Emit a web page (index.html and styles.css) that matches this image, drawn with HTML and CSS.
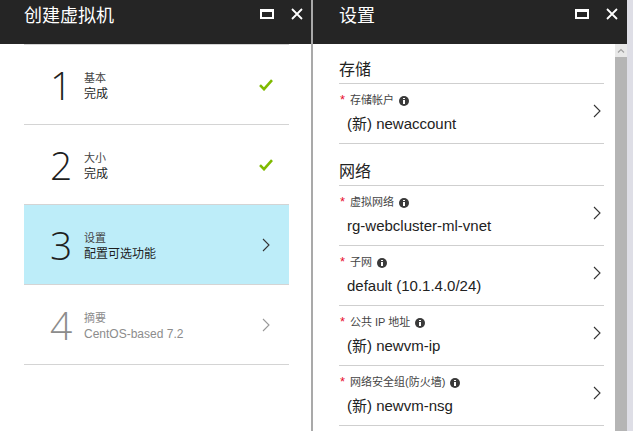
FILE: index.html
```html
<!DOCTYPE html>
<html lang="zh-CN">
<head>
<meta charset="utf-8">
<title>创建虚拟机</title>
<link rel="stylesheet" href="styles.css">
</head>
<body>
<div class="desk">
  <section class="blade blade-left">
    <header class="blade-head">
      <h1 class="blade-title">创建虚拟机</h1>
      <div class="head-actions">
        <span class="ic-max"></span>
        <svg class="ic-close" width="12" height="12" viewBox="0 0 12 12"><path d="M1 1 L11 11 M11 1 L1 11" stroke="#fff" stroke-width="1.8" fill="none"/></svg>
      </div>
    </header>
    <ol class="steps">
      <li class="step">
        <span class="step-num">1</span>
        <div class="step-text"><div class="step-label">基本</div><div class="step-sub">完成</div></div>
        <span class="step-icon"><svg width="14" height="12" viewBox="0 0 14 12"><path d="M1 6.2 L5 10.2 L13 1.2" stroke="#7fba00" stroke-width="2.6" fill="none"/></svg></span>
      </li>
      <li class="step">
        <span class="step-num">2</span>
        <div class="step-text"><div class="step-label">大小</div><div class="step-sub">完成</div></div>
        <span class="step-icon"><svg width="14" height="12" viewBox="0 0 14 12"><path d="M1 6.2 L5 10.2 L13 1.2" stroke="#7fba00" stroke-width="2.6" fill="none"/></svg></span>
      </li>
      <li class="step step-active">
        <span class="step-num">3</span>
        <div class="step-text"><div class="step-label">设置</div><div class="step-sub">配置可选功能</div></div>
        <span class="step-icon"><svg width="8" height="14" viewBox="0 0 8 14"><path d="M1 1 L7 7 L1 13" stroke="#333" stroke-width="1.1" fill="none"/></svg></span>
      </li>
      <li class="step step-disabled">
        <span class="step-num">4</span>
        <div class="step-text"><div class="step-label">摘要</div><div class="step-sub">CentOS-based 7.2</div></div>
        <span class="step-icon"><svg width="8" height="14" viewBox="0 0 8 14"><path d="M1 1 L7 7 L1 13" stroke="#999" stroke-width="1.1" fill="none"/></svg></span>
      </li>
    </ol>
  </section>

  <section class="blade blade-right">
    <header class="blade-head">
      <h1 class="blade-title">设置</h1>
      <div class="head-actions">
        <span class="ic-max"></span>
        <svg class="ic-close" width="12" height="12" viewBox="0 0 12 12"><path d="M1 1 L11 11 M11 1 L1 11" stroke="#fff" stroke-width="1.8" fill="none"/></svg>
      </div>
    </header>
    <div class="blade-body">
      <div class="form">
        <div class="group">
          <h2 class="group-title">存储</h2>
          <div class="field">
            <div class="field-main">
              <div class="field-label"><span class="req">*</span>存储帐户<span class="info"></span></div>
              <div class="field-value">(新) newaccount</div>
            </div>
            <svg class="chev" width="8" height="14" viewBox="0 0 8 14"><path d="M1 1 L7 7 L1 13" stroke="#333" stroke-width="1.1" fill="none"/></svg>
          </div>
        </div>
        <div class="group">
          <h2 class="group-title">网络</h2>
          <div class="field">
            <div class="field-main">
              <div class="field-label"><span class="req">*</span>虚拟网络<span class="info"></span></div>
              <div class="field-value">rg-webcluster-ml-vnet</div>
            </div>
            <svg class="chev" width="8" height="14" viewBox="0 0 8 14"><path d="M1 1 L7 7 L1 13" stroke="#333" stroke-width="1.1" fill="none"/></svg>
          </div>
          <div class="field">
            <div class="field-main">
              <div class="field-label"><span class="req">*</span>子网<span class="info"></span></div>
              <div class="field-value">default (10.1.4.0/24)</div>
            </div>
            <svg class="chev" width="8" height="14" viewBox="0 0 8 14"><path d="M1 1 L7 7 L1 13" stroke="#333" stroke-width="1.1" fill="none"/></svg>
          </div>
          <div class="field">
            <div class="field-main">
              <div class="field-label"><span class="req">*</span>公共 IP 地址<span class="info"></span></div>
              <div class="field-value">(新) newvm-ip</div>
            </div>
            <svg class="chev" width="8" height="14" viewBox="0 0 8 14"><path d="M1 1 L7 7 L1 13" stroke="#333" stroke-width="1.1" fill="none"/></svg>
          </div>
          <div class="field">
            <div class="field-main">
              <div class="field-label"><span class="req">*</span>网络安全组(防火墙)<span class="info"></span></div>
              <div class="field-value">(新) newvm-nsg</div>
            </div>
            <svg class="chev" width="8" height="14" viewBox="0 0 8 14"><path d="M1 1 L7 7 L1 13" stroke="#333" stroke-width="1.1" fill="none"/></svg>
          </div>
        </div>
      </div>
      <div class="scrollbar">
        <div class="scroll-btn"><svg width="8" height="5" viewBox="0 0 8 5"><path d="M1 4.5 L4 1.5 L7 4.5" stroke="#a0a0a0" stroke-width="1.2" fill="none"/></svg></div>
        <div class="scroll-thumb"></div>
      </div>
    </div>
  </section>
  <div class="edge"></div>
</div>
</body>
</html>
```

FILE: styles.css
```css
* { box-sizing: border-box; }
html, body { margin: 0; padding: 0; }
body {
  width: 633px;
  height: 431px;
  overflow: hidden;
  background: #fff;
  font-family: "Segoe UI", "Liberation Sans", "Noto Sans CJK SC", sans-serif;
  color: #222;
}
.desk {
  display: flex;
  height: 431px;
}
.blade {
  display: flex;
  flex-direction: column;
  background: #fff;
  height: 100%;
}
.blade-left {
  width: 313px;
  border-right: 2px solid #a9a9a9;
}
.blade-right {
  width: 314px;
}
.edge {
  width: 6px;
  background: #dedee6;
}
.blade-head {
  height: 44px;
  flex: none;
  background: #252525;
  display: flex;
  align-items: flex-start;
  padding: 4px 8px 0 24px;
}
.blade-right .blade-head {
  padding-left: 26px;
  padding-right: 9px;
}
.blade-title {
  flex: 1;
  margin: 0;
  font-weight: normal;
  font-size: 18px;
  line-height: 20px;
  color: #fff;
  font-family: "Segoe UI", "Noto Sans CJK SC", sans-serif;
}
.head-actions {
  display: flex;
  align-items: center;
  height: 20px;
  gap: 17px;
}
.ic-max {
  display: block;
  width: 14px;
  height: 10px;
  border: 2px solid #fff;
  border-top-width: 3px;
}
.ic-close { display: block; }

/* steps */
.steps {
  list-style: none;
  margin: 0 22px 0 24px;
  padding: 0;
  border-bottom: 1px solid #d4d4d4;
}
.step {
  height: 80px;
  border-top: 1px solid #d4d4d4;
  display: flex;
  align-items: center;
  padding: 0 16px 0 26px;
}
.step-active {
  background: #bdedf9;
}
.step-num {
  width: 34px;
  font-family: "Open Sans", "Lato", "Liberation Sans", sans-serif;
  font-weight: 300;
  font-size: 39px;
  line-height: 40px;
  color: #1e1e1e;
  margin-top: 1px;
}
.step-text {
  flex: 1;
  margin-top: 3px;
}
.step-label {
  font-size: 11px;
  line-height: 15px;
  color: #444;
}
.step-sub {
  font-size: 12px;
  line-height: 16px;
  color: #1e1e1e;
}
.step-icon {
  width: 14px;
  display: flex;
  justify-content: center;
}
.step-disabled .step-num,
.step-disabled .step-label,
.step-disabled .step-sub {
  color: #8c8c8c;
}

/* right body */
.blade-body {
  flex: 1;
  display: flex;
  min-height: 0;
}
.form {
  flex: 1;
  padding: 0 11px 0 26px;
}
.group + .group { margin-top: 2px; }
.group-title {
  margin: 0;
  font-weight: normal;
  font-size: 16px;
  line-height: 20px;
  padding: 16px 0 3px;
  border-bottom: 1px solid #cfcfcf;
  color: #222;
}
.field {
  height: 60px;
  border-bottom: 1px solid #cfcfcf;
  display: flex;
  align-items: flex-start;
  padding-right: 3px;
}
.field-main {
  flex: 1;
  padding-top: 9px;
}
.field-label {
  display: flex;
  align-items: center;
  font-size: 11px;
  line-height: 15px;
  color: #444;
}
.req {
  color: #e8112d;
  font-size: 13px;
  width: 11px;
  padding-left: 1px;
  line-height: 15px;
  position: relative;
  top: -1px;
}
.info {
  width: 10px;
  height: 10px;
  border-radius: 50%;
  background: #3a3a3a;
  margin-left: 5px;
  position: relative;
}
.info::before {
  content: "";
  position: absolute;
  left: 4px;
  top: 2px;
  width: 2px;
  height: 1px;
  background: #fff;
}
.info::after {
  content: "";
  position: absolute;
  left: 4px;
  top: 4px;
  width: 2px;
  height: 4px;
  background: #fff;
}
.field-value {
  margin-top: 6px;
  padding-left: 8px;
  font-size: 15px;
  line-height: 20px;
  color: #222;
}
.chev {
  display: block;
  flex: none;
  margin-top: 20px;
}

.scrollbar {
  width: 12px;
  display: flex;
  flex-direction: column;
}
.scroll-btn {
  height: 13px;
  background: #e8e8e8;
  display: flex;
  justify-content: center;
  align-items: center;
}
.scroll-thumb {
  flex: 1;
  background: #b5b5b5;
}
```
